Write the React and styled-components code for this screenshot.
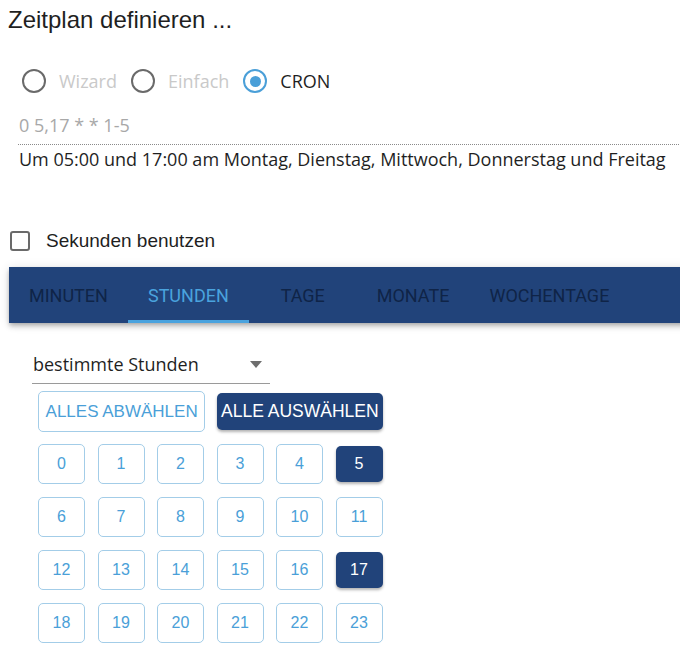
import React, { useState } from "react";
import styled, { createGlobalStyle } from "styled-components";

const Global = createGlobalStyle`
  html, body { margin: 0; padding: 0; background: #fff; overflow: hidden; }
  body { font-family: "Open Sans", "Liberation Sans", sans-serif; color: #222; }
`;

const Page = styled.div`
  width: 680px;
  height: 655px;
  overflow: hidden;
  position: relative;
`;

const Title = styled.h1`
  margin: 0;
  padding: 6px 0 0 8px;
  font-family: "Liberation Sans", Arial, sans-serif;
  font-weight: 400;
  font-size: 24px;
  line-height: 28px;
  color: #1f1f1f;
`;

const RadioRow = styled.div`
  display: flex;
  align-items: center;
  margin: 35px 0 0 22px;
  height: 24px;
`;

const RadioItem = styled.label`
  display: flex;
  align-items: center;
  margin-right: 14px;
  font-size: 18px;
  color: ${(p) => (p.$active ? "#1f1f1f" : "#c9c9c9")};
`;

const RadioCircle = styled.span`
  width: 24px;
  height: 24px;
  box-sizing: border-box;
  border-radius: 50%;
  border: 2.5px solid ${(p) => (p.$checked ? "#4a9fd8" : "#6a6a6a")};
  display: flex;
  align-items: center;
  justify-content: center;
  margin-right: 13px;
  &::after {
    content: "";
    width: 11px;
    height: 11px;
    border-radius: 50%;
    background: ${(p) => (p.$checked ? "#4a9fd8" : "transparent")};
  }
`;

const CronField = styled.div`
  margin: 20px 0 0 18px;
  border-bottom: 1px dotted #8a8a8a;
  width: 700px;
  padding: 0 0 6px 1px;
  font-size: 18px;
  line-height: 25px;
  color: #a8a8a8;
`;

const Description = styled.div`
  margin: 2px 0 0 19px;
  font-size: 18px;
  line-height: 25px;
  color: #1f1f1f;
  white-space: nowrap;
`;

const CheckRow = styled.label`
  display: flex;
  align-items: center;
  margin: 58px 0 0 10px;
  height: 22px;
  font-size: 19px;
  font-family: "Liberation Sans", Arial, sans-serif;
  color: #1f1f1f;
`;

const CheckBox = styled.span`
  width: 20px;
  height: 20px;
  box-sizing: border-box;
  border: 2px solid #6a6a6a;
  border-radius: 3px;
  margin-right: 16px;
`;

const TabBar = styled.div`
  margin: 15px 0 0 9px;
  width: 720px;
  height: 56px;
  background: #21437a;
  display: flex;
  box-shadow: 0 2px 4px -1px rgba(0, 0, 0, 0.2), 0 4px 5px 0 rgba(0, 0, 0, 0.14),
    0 1px 10px 0 rgba(0, 0, 0, 0.12);
`;

const Tab = styled.div`
  position: relative;
  min-width: 108px;
  padding: 0 20px;
  box-sizing: border-box;
  display: flex;
  align-items: center;
  justify-content: center;
  font-family: Roboto, "Liberation Sans", sans-serif;
  font-size: 18px;
  color: ${(p) => (p.$active ? "#4aa3de" : "#0f2447")};
  &::after {
    content: "";
    position: absolute;
    left: 0;
    right: 0;
    bottom: 0;
    height: 3px;
    background: ${(p) => (p.$active ? "#4aa3de" : "transparent")};
  }
`;

const Body = styled.div`
  padding: 25px 0 0 32px;
`;

const Select = styled.div`
  width: 238px;
  height: 36px;
  box-sizing: border-box;
  border-bottom: 1px solid #9a9a9a;
  display: flex;
  align-items: center;
  justify-content: space-between;
  padding: 0 8px 4px 1px;
  font-size: 18px;
  color: #1f1f1f;
`;

const Caret = styled.span`
  width: 0;
  height: 0;
  border-left: 6px solid transparent;
  border-right: 6px solid transparent;
  border-top: 7px solid #6e6e6e;
  margin-top: 2px;
`;

const Grid = styled.div`
  margin: 7px 0 0 6px;
  display: grid;
  grid-template-columns: repeat(6, 47px);
  column-gap: 12.5px;
  row-gap: 13px;
`;

const ActionRow = styled.div`
  grid-column: 1 / -1;
  display: flex;
  align-items: center;
  gap: 12px;
  margin-bottom: -1px;
`;

const Btn = styled.button`
  box-sizing: border-box;
  font-family: "Liberation Sans", Arial, sans-serif;
  font-size: ${(p) => p.$fs || 16}px;
  border-radius: 5px;
  cursor: pointer;
  display: flex;
  align-items: center;
  justify-content: center;
  padding: 0;
  ${(p) =>
    p.$filled
      ? `
    background: #21437a;
    color: #fff;
    border: none;
    box-shadow: 0 2px 3px rgba(0,0,0,0.3);
    margin: 2px 0;
    height: ${p.$h - 4}px;
  `
      : `
    background: #fff;
    color: #4a9fd8;
    border: 1px solid #a3cde8;
    height: ${p.$h}px;
  `}
`;

const WideBtn = styled(Btn)`
  width: ${(p) => (p.$filled ? 166 : 168)}px;
`;

const NumBtn = styled(Btn)`
  width: 47px;
`;

const tabs = ["MINUTEN", "STUNDEN", "TAGE", "MONATE", "WOCHENTAGE"];
const selected = [5, 17];

export default function App() {
  const [sel] = useState(selected);
  return (
    <Page>
      <Global />
      <Title>Zeitplan definieren ...</Title>
      <RadioRow>
        <RadioItem>
          <RadioCircle />
          Wizard
        </RadioItem>
        <RadioItem>
          <RadioCircle />
          Einfach
        </RadioItem>
        <RadioItem $active>
          <RadioCircle $checked />
          CRON
        </RadioItem>
      </RadioRow>
      <CronField>0 5,17 * * 1-5</CronField>
      <Description>
        Um 05:00 und 17:00 am Montag, Dienstag, Mittwoch, Donnerstag und Freitag
      </Description>
      <CheckRow>
        <CheckBox />
        Sekunden benutzen
      </CheckRow>
      <TabBar>
        {tabs.map((t) => (
          <Tab key={t} $active={t === "STUNDEN"}>
            {t}
          </Tab>
        ))}
      </TabBar>
      <Body>
        <Select>
          bestimmte Stunden
          <Caret />
        </Select>
        <Grid>
          <ActionRow>
            <WideBtn $h={41} $fs={17}>
              ALLES ABWÄHLEN
            </WideBtn>
            <WideBtn $h={41} $fs={17.5} $filled>
              ALLE AUSWÄHLEN
            </WideBtn>
          </ActionRow>
          {Array.from({ length: 24 }, (_, i) => (
            <NumBtn key={i} $h={40} $filled={sel.includes(i)}>
              {i}
            </NumBtn>
          ))}
        </Grid>
      </Body>
    </Page>
  );
}
